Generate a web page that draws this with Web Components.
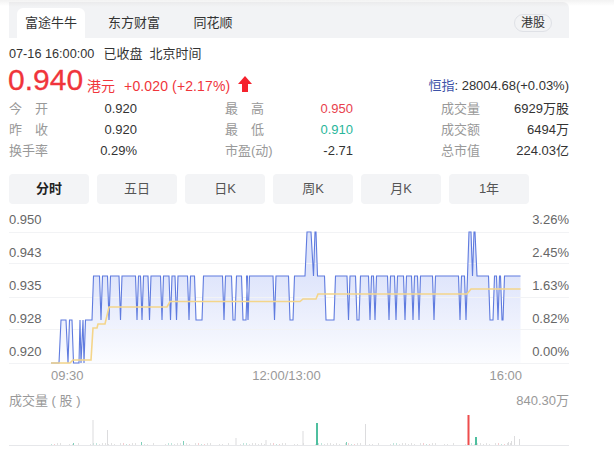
<!DOCTYPE html>
<html lang="zh"><head><meta charset="utf-8"><title>富途牛牛</title>
<style>
html,body{margin:0;height:454px;overflow:hidden;background:#fff}
body{font:13px/1.2 "Liberation Sans","Noto Sans CJK SC",sans-serif;color:#333;background:linear-gradient(#f2f2f2,#fff 6px)}
stock-page{display:block}
</style></head><body>
<stock-page>
  <stock-tabs></stock-tabs>
  <quote-head></quote-head>
  <quote-stats></quote-stats>
  <period-bar></period-bar>
  <minute-chart></minute-chart>
  <volume-chart></volume-chart>
</stock-page>
<script>
function comp(name, html, setup){
  customElements.define(name, class extends HTMLElement{
    connectedCallback(){
      if(this.shadowRoot) return;
      const r=this.attachShadow({mode:'open'});
      r.innerHTML=html;
      if(setup) setup(r);
    }
  });
}
comp('stock-page',`<style>:host{display:block;padding:2px 45px 0 9px}</style><slot></slot>`);
comp('stock-tabs',`<style>
:host{display:flex;align-items:flex-end;height:36px;background:linear-gradient(#ebebec,#f2f3f5 5px);border-radius:0 6px 0 0;padding:0 17px 0 8px;box-sizing:border-box}
.t{height:30px;line-height:30px;width:68px;text-align:center;color:#333;border-radius:6px 6px 0 0;margin-right:15px}
.on{background:#fff}
.tag{margin-left:auto;align-self:center;margin-top:5px;height:18px;line-height:17px;padding:0 6px;border:1px solid #dfe1e6;border-radius:10px;box-sizing:border-box;font-size:12px;color:#333}
</style><div class="t on">富途牛牛</div><div class="t">东方财富</div><div class="t" style="width:52px;margin-left:4px">同花顺</div><div class="tag">港股</div>`);
comp('quote-head',`<style>
:host{display:block}
.d{height:16px;line-height:16px;margin-top:8px;color:#333;display:flex;gap:7px}
.d .n{font-size:12.7px;margin-right:2px}
.p{display:flex;align-items:flex-end;height:36px;margin-top:0;color:#f0353b}
.v{font-size:30px;line-height:36px;font-weight:400;-webkit-text-stroke:.3px #f0353b;margin-left:-1px}
.u{font-size:14px;line-height:18px;margin:0 9px 3px 4px}
.c{font-size:14px;line-height:18px;margin-bottom:3px;letter-spacing:.13px}
svg{margin:0 0 6px 8px;display:block}
.i{margin-left:auto;font-size:13px;line-height:18px;margin-bottom:3px;color:#333}
.i b{font-weight:400;color:#3d52a8}
</style>
<div class="d"><span class="n">07-16 16:00:00</span><span>已收盘</span><span>北京时间</span></div>
<div class="p"><span class="v">0.940</span><span class="u">港元</span><span class="c">+0.020 (+2.17%)</span>
<svg width="14" height="16" viewBox="0 0 14 16"><path d="M7 0 14 8H10V16H4V8H0Z" fill="#f5222d"/></svg>
<span class="i"><b>恒指</b>: 28004.68(+0.03%)</span></div>`);
comp('stat-item',`<style>
:host{display:flex;justify-content:space-between;height:21px;line-height:21px;color:#333}
.l{color:#999;width:39px;display:flex;justify-content:space-between;white-space:nowrap}
</style><span class="l"><slot name="l"></slot></span><span><slot></slot></span>`);
comp('quote-stats',`<style>
:host{display:grid;grid-template-columns:repeat(3,128px);column-gap:88px;margin-top:0}
</style>
<stat-item><span slot="l">今</span><span slot="l">开</span>0.920</stat-item>
<stat-item><span slot="l">最</span><span slot="l">高</span><span style="color:#e8414c">0.950</span></stat-item>
<stat-item><span slot="l">成交量</span>6929万股</stat-item>
<stat-item><span slot="l">昨</span><span slot="l">收</span>0.920</stat-item>
<stat-item><span slot="l">最</span><span slot="l">低</span><span style="color:#29b69a">0.910</span></stat-item>
<stat-item><span slot="l">成交额</span>6494万</stat-item>
<stat-item><span slot="l">换手率</span>0.29%</stat-item>
<stat-item><span slot="l">市盈(动)</span>-2.71</stat-item>
<stat-item><span slot="l">总市值</span>224.03亿</stat-item>`);
comp('period-bar',`<style>
:host{display:flex;gap:8px;margin-top:13px}
div{width:80px;height:30px;line-height:30px;text-align:center;background:#f3f4f6;border-radius:4px;color:#555}
.on{font-weight:700;color:#222}
</style><div class="on">分时</div><div>五日</div><div>日K</div><div>周K</div><div>月K</div><div>1年</div>`);

const H=276,L=320,T=232,B=363;
function priceLine(){
  const p=[[51,B],[59,B],[61,L],[66,L],[68,B],[69.5,L],[72,L],[73.5,B],[79,B],[80,L],[81,B],[83,L],[84,B],[85.5,L],[92,L],[93.5,H]];
  const hi=x=>p.push([x,H]);
  const dip=x=>{hi(x-1.5);p.push([x,L]);hi(x+1.5)};
  const flat=(a,b)=>{hi(a-1.5);p.push([a,L],[b,L]);hi(b+1.5)};
  [101,109,120.5,137,142,149.5,162,170.5,176.5,189].forEach(dip);
  flat(196,202);dip(224);flat(233,235);flat(243,246);dip(248);dip(274.5);flat(290,293);
  hi(305);p.push([307,T],[311,T],[313.5,H],[315,T],[316,T],[317.5,H]);
  flat(326,334);dip(348.5);flat(357,359);
  [370,375,389,396,405,413,419,434,460,466].forEach(dip);
  p.push([469,T],[471,T],[472.5,H],[474,T],[475,T],[477,H]);
  flat(490,493);dip(498);flat(502,503);hi(520.5);
  return p;
}
const grid=[232,263,297,329,363];
comp('minute-chart',`<style>
:host{display:block}
.b{position:relative;height:160px}
svg{position:absolute;left:0;top:0;display:block}
.a{position:relative;display:flex;justify-content:space-between;padding-top:8px;color:#666}
.a div{display:flex;flex-direction:column;gap:18px}
.a span{display:block;height:15px;line-height:15px}
.r{text-align:right}
.t{display:flex;justify-content:space-between;height:24px;line-height:24px;color:#999;padding:0 47px 0 42px}
</style>
<div class="b"><svg id="s" width="560" height="160" viewBox="9 204 560 160">
<defs><linearGradient id="g" gradientUnits="userSpaceOnUse" x1="0" y1="276" x2="0" y2="363"><stop offset="0" stop-color="#dfe5fb"/><stop offset="1" stop-color="#fbfcff"/></linearGradient></defs></svg>
<div class="a"><div><span>0.950</span><span>0.943</span><span>0.935</span><span>0.928</span><span>0.920</span></div>
<div class="r"><span>3.26%</span><span>2.45%</span><span>1.63%</span><span>0.82%</span><span>0.00%</span></div></div></div>
<div class="t"><span>09:30</span><span>12:00/13:00</span><span>16:00</span></div>`,r=>{
  const s=r.getElementById('s'),NS='http://www.w3.org/2000/svg';
  const add=(t,a)=>{const e=document.createElementNS(NS,t);for(const k in a)e.setAttribute(k,a[k]);s.appendChild(e)};
  const pts=priceLine(),d=pts.map((q,i)=>(i?'L':'M')+q[0]+' '+q[1]).join('');
  add('path',{d:d+'L520.5 363L51 363Z',fill:'url(#g)'});
  grid.forEach(y=>add('line',{x1:9,x2:569,y1:y+.5,y2:y+.5,stroke:'#f2f3f5'}));
  add('path',{d,fill:'none',stroke:'#5f7bdf','stroke-width':1.1});
  add('path',{d:'M51 363H70L73 360H91L93 328H97L98 324H105L109 307H167L170 301.5H300L303 299H316L318 294H467L471 289H520.5',fill:'none',stroke:'#f4d58a','stroke-width':1.6});
});
comp('volume-chart',`<style>
:host{display:block}
.h{display:flex;justify-content:space-between;height:20px;line-height:20px;margin-top:3px;color:#999}
svg{display:block}
</style><div class="h"><span>成交量 ( 股 )</span><span>840.30万</span></div>
<svg id="s" width="560" height="35" viewBox="9 411 560 35"></svg>`,r=>{
  const s=r.getElementById('s'),NS='http://www.w3.org/2000/svg';
  const bar=(x,y,c,w)=>{const e=document.createElementNS(NS,'rect');e.setAttribute('x',x);e.setAttribute('y',y);e.setAttribute('width',w||1);e.setAttribute('height',445-y);e.setAttribute('fill',c);s.appendChild(e)};
  const base=document.createElementNS(NS,'rect');
  base.setAttribute('x',9);base.setAttribute('y',445);base.setAttribute('width',560);base.setAttribute('height',1);base.setAttribute('fill','#e6e7ea');s.appendChild(base);
  const cols=['#e2e2e2','#e2e2e2','#f5cdd0','#bfe6dc','#e2e2e2'];
  let n=7;
  for(let x=51;x<521;x+=3){n=(n*37+11)%101;if(n%3)bar(x,444-(n%3===1?1:0),cols[n%5]);}
  [[92.5,420],[107,430],[235.5,438],[265.5,440],[302.5,431],[365,424],[514,436],[519,439],[511,441],[508,442]].forEach(b=>bar(b[0],b[1],'#dcdcde'));
  bar(316,423,'#4fbf9f',2);bar(467.5,415,'#ee4d4d',2);bar(475,437,'#4fbf9f',2);
  [[73,443],[141,442],[346,442],[183,441]].forEach(b=>bar(b[0],b[1],'#7fd0ba'));
});
</script></body></html>
